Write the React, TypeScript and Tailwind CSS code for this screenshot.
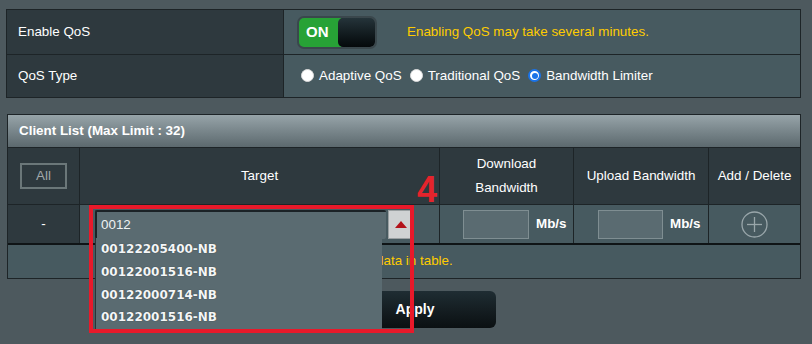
import React from "react";

const font = { fontFamily: '"Liberation Sans", Arial, sans-serif' };

function Radio({ checked, label }: { checked?: boolean; label: string }) {
  return (
    <span className="flex items-center gap-[5px] mr-[8px]">
      {checked ? (
        <span className="w-[13px] h-[13px] rounded-full bg-white flex items-center justify-center border-[2px] border-[#1a73e8]">
          <span className="w-[6px] h-[6px] rounded-full bg-[#1a73e8]" />
        </span>
      ) : (
        <span className="w-[13px] h-[13px] rounded-full bg-white border border-[#dcdcdc]" />
      )}
      <span>{label}</span>
    </span>
  );
}

export default function App() {
  const items = ["00122205400-NB", "00122001516-NB", "00122000714-NB", "00122001516-NB"];
  return (
    <div
      className="relative w-[812px] h-[344px] overflow-hidden bg-[#4d595e] text-white text-[13.4px] pt-[9px]"
      style={font}
    >
      {/* Top table */}
      <div className="ml-[6px] w-[795px] border border-[#1d2427]">
        <div className="grid grid-cols-[277px_1fr] h-[45px] border-b border-[#1d2427]">
          <div className="bg-[#2e393e] flex items-center pl-[11px] border-r border-[#1d2427]">Enable QoS</div>
          <div className="bg-[#475a60] flex items-center pl-[13px]">
            <div className="w-[80px] h-[33px] rounded-[7px] bg-[#3a474c] p-[2px] flex">
              <div className="flex-1 flex rounded-[5px] overflow-hidden">
                <div className="w-[42px] bg-[#27a236] flex items-center pl-[7px] font-bold text-[15px]">ON</div>
                <div className="flex-1 -ml-[3px] rounded-[5px] bg-gradient-to-b from-[#25343a] to-[#05090b]" />
              </div>
            </div>
            <span className="ml-[30px] text-[#ffcc00]">Enabling QoS may take several minutes.</span>
          </div>
        </div>
        <div className="grid grid-cols-[277px_1fr] h-[42px]">
          <div className="bg-[#2e393e] flex items-center pl-[11px] border-r border-[#1d2427]">QoS Type</div>
          <div className="bg-[#475a60] flex items-center pl-[17px]">
            <Radio label="Adaptive QoS" />
            <Radio label="Traditional QoS" />
            <Radio checked label="Bandwidth Limiter" />
          </div>
        </div>
      </div>

      {/* Client list table */}
      <div className="ml-[7px] mt-[16px] w-[794px] border border-[#1d2427]">
        <div className="h-[33px] bg-gradient-to-b from-[#97a4a9] to-[#5c696e] flex items-center pl-[11px] font-bold border-b border-[#1d2427]">
          Client List (Max Limit : 32)
        </div>
        <div className="grid grid-cols-[72px_360px_134px_135px_1fr] h-[57px] bg-[#2e393e] border-b border-[#1d2427]">
          <div className="flex items-center justify-center border-r border-[#1d2427]">
            <div className="w-[47px] h-[26px] border-[2px] border-[#6b7779] flex items-center justify-center text-[#a0a8ab]">All</div>
          </div>
          <div className="flex items-center justify-center border-r border-[#1d2427]">Target</div>
          <div className="flex items-center justify-center text-center leading-[24px] border-r border-[#1d2427]">
            Download
            <br />
            Bandwidth
          </div>
          <div className="flex items-center justify-center border-r border-[#1d2427]">Upload Bandwidth</div>
          <div className="flex items-center justify-center">Add / Delete</div>
        </div>
        <div className="grid grid-cols-[72px_360px_134px_135px_1fr] h-[40px] bg-[#475a60] border-b-[2px] border-[#0f1416]">
          <div className="flex items-center justify-center bg-[#2e393e] border-r border-[#1d2427]">-</div>
          <div className="relative flex items-center pl-[15px] border-r border-[#1d2427]">
            <div className="w-[291px] h-[29px] bg-[#5a6b71] border-l-[2px] border-t-[2px] border-[#1b2226] rounded-[2px] flex items-center pl-[4px] text-[#eef2f3]">
              0012
            </div>
            <div className="ml-[2px] w-[25px] h-[29px] bg-[#cfd2d3] border border-[#9aa0a2] flex items-center justify-center">
              <svg width="12" height="7" viewBox="0 0 12 7">
                <polygon points="6,0 12,7 0,7" fill="#b3131b" />
              </svg>
            </div>
            <div className="absolute left-[15px] top-[33px] w-[287px] h-[93px] bg-[#5a6b71] border-l border-[#2a3438] z-10">
              {items.map((t, i) => (
                <div
                  key={i}
                  className="h-[22.7px] flex items-center pl-[5px] font-bold text-[12px] text-[#f4f6f7]"
                  style={{ fontFamily: '"DejaVu Sans", sans-serif', textShadow: "0 0 1px #2a3438" }}
                >
                  {t}
                </div>
              ))}
            </div>
          </div>
          <div className="flex items-center pl-[23px] gap-[7px] border-r border-[#1d2427]">
            <div className="w-[66px] h-[29px] bg-[#5a6b71] border border-[#7f8e92]" />
            <span className="font-bold">Mb/s</span>
          </div>
          <div className="flex items-center pl-[24px] gap-[7px] border-r border-[#1d2427]">
            <div className="w-[65px] h-[29px] bg-[#5a6b71] border border-[#7f8e92]" />
            <span className="font-bold">Mb/s</span>
          </div>
          <div className="flex items-center justify-center">
            <svg width="27" height="27" viewBox="0 0 27 27">
              <circle cx="13.5" cy="13.5" r="12.5" fill="none" stroke="#99a6aa" strokeWidth="1.3" />
              <line x1="13.5" y1="6" x2="13.5" y2="21" stroke="#99a6aa" strokeWidth="1.3" />
              <line x1="6" y1="13.5" x2="21" y2="13.5" stroke="#99a6aa" strokeWidth="1.3" />
            </svg>
          </div>
        </div>
        <div className="h-[33px] bg-[#475a60] flex items-center justify-center text-[#ffcc00]">No data in table.</div>
      </div>

      {/* Apply */}
      <div className="ml-[334px] mt-[12px] w-[162px] h-[37px] rounded-[6px] bg-gradient-to-b from-[#1f2d33] to-[#0b1012] flex items-center justify-center font-bold text-[14px]">
        Apply
      </div>

      {/* Annotation */}
      <div className="absolute left-[89px] top-[205px] w-[325px] h-[128px] border-[4px] border-[#e8192a] z-20 pointer-events-none" />
      <div className="absolute left-[417px] top-[172px] text-[#e5242c] font-bold text-[36px] leading-none z-20" style={font}>
        4
      </div>
    </div>
  );
}
